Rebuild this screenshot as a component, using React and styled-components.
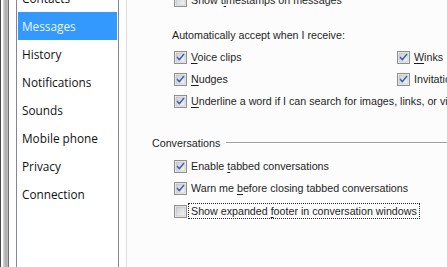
import React from "react";
import styled, { createGlobalStyle } from "styled-components";

const Global = createGlobalStyle`
  html, body {
    margin: 0;
    padding: 0;
    background: #fcfcfc;
    overflow: hidden;
  }
`;

const Window = styled.div`
  display: flex;
  width: 447px;
  height: 267px;
  overflow: hidden;
  background: #fcfcfc;
`;

const Frame = styled.div`
  flex: none;
  width: 16px;
  display: flex;
  background: #fdfdfd;
`;

const FrameEdge = styled.div`
  flex: none;
  width: ${props => props.w}px;
  background: ${props => props.bg};
  margin-right: ${props => props.gap || 0}px;
`;

const Sidebar = styled.ul`
  flex: none;
  width: 99px;
  margin: 0;
  padding: 0 1px 0 1px;
  list-style: none;
  background: #ffffff;
  border-left: 1px solid #828790;
  border-right: 1px solid #828790;
  box-sizing: content-box;
  font-family: "Open Sans", "Noto Sans", sans-serif;
  font-size: 11.8px;
`;

const Scroller = styled.div`
  margin-top: -16px;
`;

const NavItem = styled.li`
  height: 28px;
  display: flex;
  align-items: center;
  padding-left: 4px;
  background: ${props => (props.active ? "#3399ff" : "transparent")};
  color: ${props => (props.active ? "#eaf4ff" : "#111111")};
`;

const Divider = styled.div`
  flex: none;
  width: 7px;
  border-right: 1px solid #dcdcdc;
  background: #fdfdfd;
`;

const Content = styled.div`
  flex: 1;
  padding-left: 24px;
  font-family: "Liberation Sans", Arial, sans-serif;
  font-size: 10.7px;
  color: #1e1e1e;
  background: #fcfcfc;
`;

const Stack = styled.div`
  margin-top: -11px;
  padding-left: 23px;
  display: flex;
  flex-direction: column;
`;

const Row = styled.label`
  display: flex;
  align-items: center;
  gap: 3px;
  height: ${props => props.h || 22}px;
`;

const Pair = styled.div`
  display: grid;
  grid-template-columns: 223px 1fr;
`;

const Caption = styled.div`
  height: 22px;
  display: flex;
  align-items: center;
  margin-left: -2px;
  margin-top: ${props => props.mt || 0}px;
`;

const Section = styled.div`
  display: flex;
  align-items: center;
  gap: 6px;
  height: 22px;
  margin: ${props => props.mt || 0}px 0 1px -22px;
  white-space: nowrap;
`;

const Rule = styled.div`
  flex: 1;
  height: 1px;
  background: #a0a0a0;
  border-bottom: 1px solid #ffffff;
`;

const Text = styled.span`
  white-space: nowrap;
  padding: 1px 2px;
  border: 1px ${props => (props.focus ? "dotted #222" : "solid transparent")};
  margin-left: -2px;
`;

const Key = styled.u`
  text-decoration-thickness: 1px;
  text-underline-offset: 2px;
`;

const Box = styled.span`
  flex: none;
  width: 13px;
  height: 13px;
  display: inline-block;
`;

const Check = ({ on }) => (
  <Box>
    <svg width="13" height="13" viewBox="0 0 13 13">
      <defs>
        <linearGradient id={on ? "gOn" : "gOff"} x1="0" y1="0" x2="1" y2="1">
          <stop offset="0" stopColor="#c9ccd1" />
          <stop offset="1" stopColor="#f7f7f7" />
        </linearGradient>
      </defs>
      <rect x="0.5" y="0.5" width="12" height="12" fill="#f4f4f4" stroke="#8e8f8f" />
      <rect x="2" y="2" width="9" height="9" fill={`url(#${on ? "gOn" : "gOff"})`} stroke="#b7babf" strokeWidth="0.6" />
      {on && (
        <path d="M3.4 6.4 L5.3 8.7 L9.6 3.5" fill="none" stroke="#4262ad" strokeWidth="1.5" strokeLinecap="round" strokeLinejoin="round" />
      )}
    </svg>
  </Box>
);

const Option = ({ on, focus, h, children }) => (
  <Row h={h}>
    <Check on={on} />
    <Text focus={focus}>{children}</Text>
  </Row>
);

const navItems = ["Contacts", "Messages", "History", "Notifications", "Sounds", "Mobile phone", "Privacy", "Connection"];

const App = () => (
  <>
    <Global />
    <Window>
      <Frame>
        <FrameEdge w={1} bg="#4a4a4a" gap={2} />
        <FrameEdge w={5} bg="linear-gradient(90deg, #d8d8d8, #a9a9a9 60%, #c4c4c4)" />
        <FrameEdge w={1} bg="#6e6e6e" />
      </Frame>
      <Sidebar>
        <Scroller>
          {navItems.map(item => (
            <NavItem key={item} active={item === "Messages"}>{item}</NavItem>
          ))}
        </Scroller>
      </Sidebar>
      <Divider />
      <Content>
        <Stack>
          <Option>Show t<Key>i</Key>mestamps on messages</Option>
          <Caption mt={13}>Automatically accept when I receive:</Caption>
          <Pair>
            <Option on><Key>V</Key>oice clips</Option>
            <Option on><Key>W</Key>inks</Option>
            <Option on><Key>N</Key>udges</Option>
            <Option on>Invitations</Option>
          </Pair>
          <Option on><Key>U</Key>nderline a word if I can search for images, links, or videos</Option>
          <Section mt={20}>
            Conversations
            <Rule />
          </Section>
          <Option on>Enable <Key>t</Key>abbed conversations</Option>
          <Option on>Warn me <Key>b</Key>efore closing tabbed conversations</Option>
          <Option focus h={24}>Show expanded <Key>f</Key>ooter in conversation windows</Option>
        </Stack>
      </Content>
    </Window>
  </>
);

export default App;
